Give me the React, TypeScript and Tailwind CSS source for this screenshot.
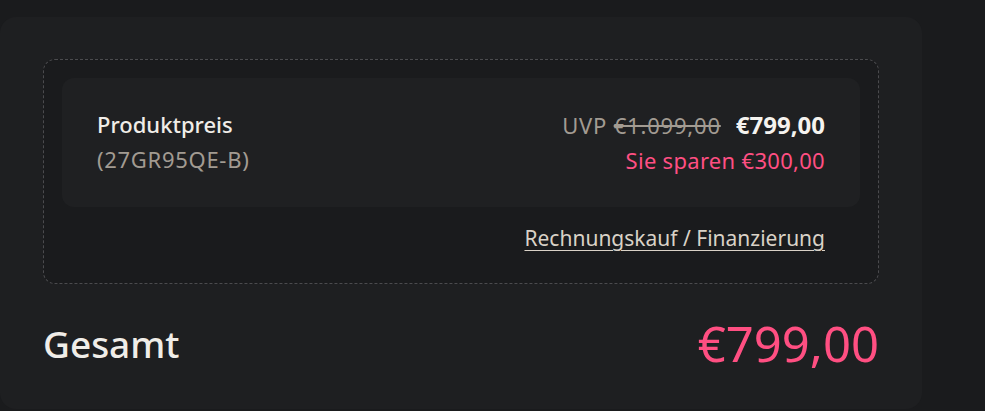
export default function App() {
	return (
		<div className="min-h-screen bg-[#1a1b1d] pt-[17px] font-['Noto_Sans',sans-serif]">
			<div className="w-[922px] rounded-2xl bg-[#1e1f21] px-[43px] pt-[42px] pb-[35px]">
				<div className="rounded-[12px] border border-dashed border-[#4b4b4e] bg-[#1a1b1d] px-[18px] pt-[18px] pb-[30px]">
					<div className="flex justify-between rounded-[12px] bg-[#1f2022] px-[35px] py-[29px] text-[22px] leading-[35px]">
						<div className="flex flex-col">
							<span className="font-medium text-[#f0ede8]">Produktpreis</span>
							<span className="tracking-[0.7px] text-[#a29b92]">(27GR95QE-B)</span>
						</div>
						<div className="flex flex-col items-end">
							<div className="flex items-baseline gap-[15px]">
								<span className="tracking-[0.8px] text-[#a29b92]">
									UVP <span className="line-through">€1.099,00</span>
								</span>
								<span className="text-[24px] font-bold text-[#f5f3ef]">€799,00</span>
							</div>
							<span className="tracking-[0.3px] text-[#ff4f82]">Sie sparen €300,00</span>
						</div>
					</div>
					<div className="mt-[16px] flex justify-end pr-[35px] text-[21px] leading-[30px]">
						<a href="#" className="text-[#d9d2c7] underline underline-offset-4 decoration-1">
							Rechnungskauf / Finanzierung
						</a>
					</div>
				</div>
				<div className="mt-[30px] flex h-[60px] items-center justify-between">
					<span className="text-[37px] font-medium text-[#f0ede8]">Gesamt</span>
					<span className="text-[49px] text-[#ff4f82]">€799,00</span>
				</div>
			</div>
		</div>
	);
}
